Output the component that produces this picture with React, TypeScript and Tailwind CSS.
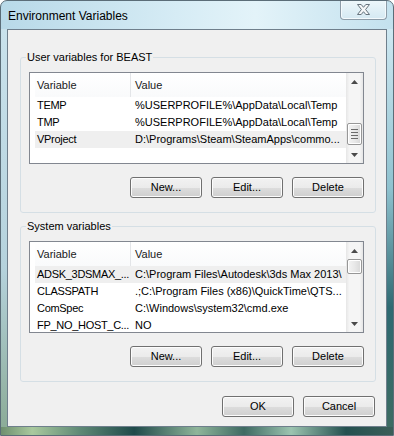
import React from 'react';

type Row = { name: string; value: string; hl?: boolean };

const userRows: Row[] = [
  { name: 'TEMP', value: '%USERPROFILE%\\AppData\\Local\\Temp' },
  { name: 'TMP', value: '%USERPROFILE%\\AppData\\Local\\Temp' },
  { name: 'VProject', value: 'D:\\Programs\\Steam\\SteamApps\\commo...', hl: true },
];

const systemRows: Row[] = [
  { name: 'ADSK_3DSMAX_...', value: 'C:\\Program Files\\Autodesk\\3ds Max 2013\\', hl: true },
  { name: 'CLASSPATH', value: '.;C:\\Program Files (x86)\\QuickTime\\QTS...' },
  { name: 'ComSpec', value: 'C:\\Windows\\system32\\cmd.exe' },
  { name: 'FP_NO_HOST_C...', value: 'NO' },
];

function Arrow({ down }: { down?: boolean }) {
  return (
    <div className="flex h-[17px] items-center justify-center">
      <svg width="7" height="4" viewBox="0 0 7 4">
        <path d={down ? 'M0 0H7L3.5 4Z' : 'M0 4H7L3.5 0Z'} fill="#4a4a4a" />
      </svg>
    </div>
  );
}

function ScrollBar({ offset, thumb, grip }: { offset: number; thumb: number; grip?: boolean }) {
  return (
    <div className="flex w-[17px] shrink-0 flex-col bg-[linear-gradient(90deg,#e6e6e6,#f5f5f5_20%,#f5f5f5_80%,#e6e6e6)]">
      <Arrow />
      <div className="flex-1 px-[1px]">
        <div style={{ height: offset }} />
        <div
          className="flex flex-col items-center justify-center gap-[2px] rounded-[2px] border border-[#979797] bg-[linear-gradient(90deg,#f4f4f4,#e8e8e8_50%,#d8d8d8)] shadow-[inset_0_0_0_1px_#ffffff]"
          style={{ height: thumb }}
        >
          {grip && (
            <>
              <div className="h-[1px] w-[7px] bg-[#6a6a6a]" />
              <div className="h-[1px] w-[7px] bg-[#6a6a6a]" />
              <div className="h-[1px] w-[7px] bg-[#6a6a6a]" />
              <div className="h-[1px] w-[7px] bg-[#6a6a6a]" />
            </>
          )}
        </div>
      </div>
      <Arrow down />
    </div>
  );
}

function VarList({ rows, offset, thumb, grip }: { rows: Row[]; offset: number; thumb: number; grip?: boolean }) {
  return (
    <div className="flex h-[92px] border border-[#828790] bg-white">
      <div className="min-w-0 flex-1 overflow-hidden pl-[5px]">
        <div className="flex h-[24px] items-center bg-[linear-gradient(#ffffff,#f9fafb)] text-[#1a1a1a]">
          <div className="flex h-full w-[96px] items-center border-r border-[#e3e5e8] pl-[2px]">Variable</div>
          <div className="pl-[4px]">Value</div>
        </div>
        {rows.map((r) => (
          <div key={r.name} className={`flex h-[17px] items-center whitespace-nowrap ${r.hl ? 'bg-[#efefef]' : ''}`}>
            <div className="w-[96px] shrink-0 overflow-hidden pl-[2px] tracking-[-0.3px]">{r.name}</div>
            <div className="pl-[4px]">{r.value}</div>
          </div>
        ))}
      </div>
      <ScrollBar offset={offset} thumb={thumb} grip={grip} />
    </div>
  );
}

function Btn({ label, w = 'w-[72px]' }: { label: string; w?: string }) {
  return (
    <button
      className={`${w} h-[21px] rounded-[3px] border border-[#707070] bg-[linear-gradient(#f2f2f2,#ebebeb_50%,#dddddd_50%,#cfcfcf)] text-[11px] text-black shadow-[inset_0_0_0_1px_#fcfcfc]`}
    >
      {label}
    </button>
  );
}

function Group({ title, children, className = '' }: { title: string; children: React.ReactNode; className?: string }) {
  return (
    <fieldset className={`rounded-[3px] border border-[#d5dfe5] pl-[8px] pr-[11px] pb-[14px] ${className}`}>
      <legend className="-ml-[3px] px-[1px] text-[11px] leading-[14px] text-black">{title}</legend>
      <div className="pt-[8px]">{children}</div>
    </fieldset>
  );
}

export default function App() {
  return (
    <div className="flex h-[436px] w-[394px] flex-col overflow-hidden rounded-t-[7px] border border-[#5b6d78] bg-[linear-gradient(90deg,#b8d9e8,#d6ecf5_45%,#e3f3f9_65%,#c3e1ee)] font-['Liberation_Sans',Arial,sans-serif] text-[11px] text-black">
      <div className="flex h-[28px] shrink-0 items-start justify-between pr-[6px]">
        <span className="pl-[7px] pt-[8px] text-[12px] leading-[15px] text-black">Environment Variables</span>
        <div className="-mt-[1px] flex h-[20px] w-[47px] items-center justify-center rounded-b-[4px] border border-t-0 border-[#8d9ca8] bg-[linear-gradient(#eef7fb,#d5e9f2)] shadow-[inset_0_0_0_1px_#f4fafd]">
          <svg width="13" height="11" viewBox="0 0 13 11">
            <path
              d="M0.5 0.5H4.2L6.5 3.3L8.8 0.5H12.5L8.6 5.5L12.5 10.5H8.8L6.5 7.7L4.2 10.5H0.5L4.4 5.5Z"
              fill="#f5f7f8"
              stroke="#66737d"
              strokeWidth="1"
              strokeLinejoin="round"
            />
          </svg>
        </div>
      </div>
      <div className="flex h-[398px] shrink-0">
        <div className="w-[6px] bg-[linear-gradient(#c9e2ec,#b5d2dc_60%,#8cac98)]" />
        <div className="w-[380px] border border-[#6f7f8c] bg-[#f0f0f0] pl-[12px] pr-[10px] pt-[20px]">
          <Group title="User variables for BEAST">
            <VarList rows={userRows} offset={33} thumb={22} grip />
            <div className="mt-[13px] flex justify-end gap-[9px]">
              <Btn label="New..." />
              <Btn label="Edit..." />
              <Btn label="Delete" />
            </div>
          </Group>
          <Group title="System variables" className="mt-[6px]">
            <VarList rows={systemRows} offset={0} thumb={15} />
            <div className="mt-[13px] flex justify-end gap-[9px]">
              <Btn label="New..." />
              <Btn label="Edit..." />
              <Btn label="Delete" />
            </div>
          </Group>
          <div className="mt-[14px] flex justify-end gap-[9px] pr-[1px]">
            <Btn label="OK" />
            <Btn label="Cancel" />
          </div>
        </div>
        <div className="w-[6px] bg-[linear-gradient(#cfe8f2,#8fc2cf_40%,#2f6a72_70%,#3d6b62)]" />
      </div>
      <div className="flex-1 bg-[linear-gradient(90deg,#6e8f6f,#a9c99e_8%,#5f8a76_20%,#1f4a4a_34%,#8fb59a_50%,#3e6a62_62%,#9cc4b0_74%,#24504f_88%,#3b5e58)]" />
    </div>
  );
}
